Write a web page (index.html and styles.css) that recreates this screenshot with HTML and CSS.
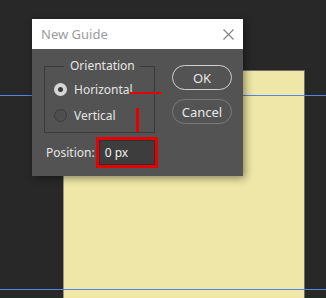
FILE: index.html
```html
<!DOCTYPE html>
<html lang="en">
<head>
    <meta charset="UTF-8">
    <title>New Guide</title>
    <link rel="stylesheet" href="styles.css">
</head>
<body>
    <div class="workspace">
        <div class="canvas"></div>
        <div class="guide guide-top"></div>
        <div class="guide guide-bottom"></div>

        <div class="dialog">
            <div class="titlebar">
                <span class="title">New Guide</span>
                <svg class="close" width="11" height="11" viewBox="0 0 11 11">
                    <path d="M0.5 0.5 L10.5 10.5 M10.5 0.5 L0.5 10.5" stroke="#808080" stroke-width="1.1" fill="none"/>
                </svg>
            </div>

            <div class="dialog-body">
                <fieldset class="group">
                    <legend>Orientation</legend>
                    <div class="radio-row">
                        <span class="radio checked"></span>
                        <span class="label">Horizontal</span>
                    </div>
                    <div class="radio-row">
                        <span class="radio"></span>
                        <span class="label">Vertical</span>
                    </div>
                </fieldset>

                <div class="buttons">
                    <button class="btn btn-default">OK</button>
                    <button class="btn">Cancel</button>
                </div>

                <div class="position-row">
                    <span class="label">Position:</span>
                    <div class="highlight">
                        <div class="field">0 px</div>
                    </div>
                </div>
            </div>

            <!-- annotation marks -->
            <div class="mark mark-h"></div>
            <div class="mark mark-v"></div>
        </div>
    </div>
</body>
</html>
```

FILE: styles.css
```css
html, body {
    margin: 0;
    padding: 0;
}
body {
    background-color: #282828;
    font-family: "Noto Sans", "Open Sans", sans-serif;
    width: 326px;
    height: 298px;
    overflow: hidden;
}
.workspace {
    position: relative;
    width: 326px;
    height: 298px;
    overflow: hidden;
}
.canvas {
    position: absolute;
    left: 63px;
    top: 70px;
    width: 240px;
    height: 227px;
    background-color: #efe7a7;
    border: 1px solid #6e6e6e;
    border-bottom: 0;
    border-left-color: #9a9478;
}
.guide {
    position: absolute;
    left: 0;
    right: 0;
    height: 1px;
    background-color: #5087e2;
}
.guide-top {
    top: 95px;
}
.guide-bottom {
    top: 289px;
}
.dialog {
    position: absolute;
    left: 32px;
    top: 19px;
    width: 211px;
    height: 157px;
    background-color: #535353;
    box-shadow: 2px 2px 8px rgba(0, 0, 0, 0.45);
    color: #e2e2e2;
    font-size: 12px;
}
.titlebar {
    height: 30px;
    background-color: #ffffff;
    display: flex;
    align-items: center;
    justify-content: space-between;
    padding: 0 9px 0 9px;
}
.title {
    color: #9c9c9c;
    font-size: 13px;
}
.close {
    margin-top: 1px;
}
.dialog-body {
    display: grid;
    grid-template-columns: 111px 60px;
    column-gap: 17px;
    padding: 9px 0 0 12px;
}
.group {
    margin: 0;
    padding: 2px 0 4px 9px;
    border: 1px solid #3b3b3b;
    width: 111px;
    box-sizing: border-box;
    min-width: 0;
}
.group legend {
    margin-left: 10px;
    padding: 0 5px 0 6px;
    line-height: 16px;
    color: #e6e6e6;
}
.radio-row {
    display: flex;
    align-items: center;
    gap: 7px;
    height: 26px;
}
.radio {
    width: 13px;
    height: 13px;
    border-radius: 50%;
    box-sizing: border-box;
    border: 1px solid #3c3c3c;
    background-color: #4f4f4f;
    display: flex;
    align-items: center;
    justify-content: center;
}
.radio.checked {
    border: none;
    background-color: #d6d6d6;
}
.radio.checked::after {
    content: "";
    width: 5px;
    height: 5px;
    border-radius: 50%;
    background-color: #3a3a3a;
}
.label {
    color: #e4e4e4;
}
.buttons {
    display: flex;
    flex-direction: column;
    gap: 9px;
    margin-top: 7px;
}
.btn {
    width: 60px;
    height: 25px;
    border-radius: 13px;
    border: 1.5px solid #7a7a7a;
    background: transparent;
    color: #e6e6e6;
    font-family: inherit;
    font-size: 13px;
    padding: 0;
}
.btn-default {
    border-color: #cfcfcf;
}
.position-row {
    grid-column: 1 / 3;
    display: flex;
    align-items: center;
    gap: 1px;
    margin-top: 4px;
    padding-left: 2px;
}
.highlight {
    border: 3px solid #e60000;
    width: 62px;
    height: 31px;
    box-sizing: border-box;
}
.field {
    height: 100%;
    box-sizing: border-box;
    border: 1px solid #2f2f2f;
    background-color: #3d3d3d;
    color: #f0f0f0;
    padding-left: 5px;
    line-height: 23px;
}
.mark {
    position: absolute;
    background-color: #e60000;
}
.mark-h {
    left: 98px;
    top: 73px;
    width: 32px;
    height: 2px;
}
.mark-v {
    left: 104px;
    top: 89px;
    width: 3px;
    height: 24px;
}
```
